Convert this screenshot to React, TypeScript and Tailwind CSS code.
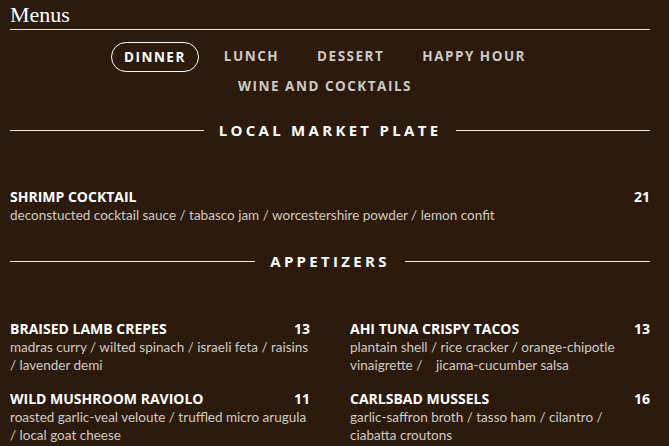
const tabs = ["DINNER", "LUNCH", "DESSERT", "HAPPY HOUR", "WINE AND COCKTAILS"];

type Item = { name: string; price: string; desc: string };

const appetizers: Item[] = [
  {
    name: "BRAISED LAMB CREPES",
    price: "13",
    desc: "madras curry / wilted spinach / israeli feta / raisins / lavender demi",
  },
  {
    name: "AHI TUNA CRISPY TACOS",
    price: "13",
    desc: "plantain shell / rice cracker / orange-chipotle vinaigrette /\u00a0\u00a0\u00a0 jicama-cucumber salsa",
  },
  {
    name: "WILD MUSHROOM RAVIOLO",
    price: "11",
    desc: "roasted garlic-veal veloute / truffled micro arugula / local goat cheese",
  },
  {
    name: "CARLSBAD MUSSELS",
    price: "16",
    desc: "garlic-saffron broth / tasso ham / cilantro / ciabatta croutons",
  },
];

function SectionTitle({ children }: { children: string }) {
  return (
    <div className="flex items-center gap-[15px]">
      <div className="h-px flex-1 bg-[#f2ede6]" />
      <h2 className="text-[15px] font-bold tracking-[3.3px] text-white leading-none">
        {children}
      </h2>
      <div className="h-px flex-1 bg-[#f2ede6]" />
    </div>
  );
}

function MenuItem({ item }: { item: Item }) {
  return (
    <div>
      <div className="flex justify-between text-[14px] font-bold leading-[18px] text-white">
        <span>{item.name}</span>
        <span>{item.price}</span>
      </div>
      <p
        className="text-[13.5px] leading-[18.5px] text-[#d0cac3]"
        style={{ fontFamily: 'Lato, "Open Sans", sans-serif' }}
      >
        {item.desc}
      </p>
    </div>
  );
}

export default function App() {
  return (
    <div
      className="min-h-screen bg-[#2c1b0d] pl-[10px] pr-[19px] pt-[3px]"
      style={{ fontFamily: '"Open Sans", "Liberation Sans", sans-serif' }}
    >
      <h1
        className="text-[22px] font-medium leading-[24px] text-white border-b border-[#e9e4dc] pb-[2px]"
        style={{ fontFamily: '"Liberation Serif", serif' }}
      >
        Menus
      </h1>

      <nav className="ml-[35px] mt-[12px] flex w-[560px] flex-wrap justify-center gap-x-[12px]">
        {tabs.map((t, i) => (
          <button
            key={t}
            className={
              i === 0
                ? "h-[30px] rounded-full border border-white px-[12px] text-[13.5px] font-bold tracking-[1.5px] text-white"
                : "h-[29px] rounded-full border border-transparent px-[12px] text-[13.5px] font-bold tracking-[1.5px] text-[#cdc9c4]"
            }
          >
            {t}
          </button>
        ))}
      </nav>

      <div className="mt-[22px]">
        <SectionTitle>LOCAL MARKET PLATE</SectionTitle>
      </div>
      <div className="mt-[50px]">
        <MenuItem
          item={{
            name: "SHRIMP COCKTAIL",
            price: "21",
            desc: "deconstucted cocktail sauce / tabasco jam / worcestershire powder / lemon confit",
          }}
        />
      </div>

      <div className="mt-[29px]">
        <SectionTitle>APPETIZERS</SectionTitle>
      </div>
      <div className="mt-[51px] grid grid-cols-2 gap-x-[40px] gap-y-[15px]">
        {appetizers.map((a) => (
          <MenuItem key={a.name} item={a} />
        ))}
      </div>
    </div>
  );
}
